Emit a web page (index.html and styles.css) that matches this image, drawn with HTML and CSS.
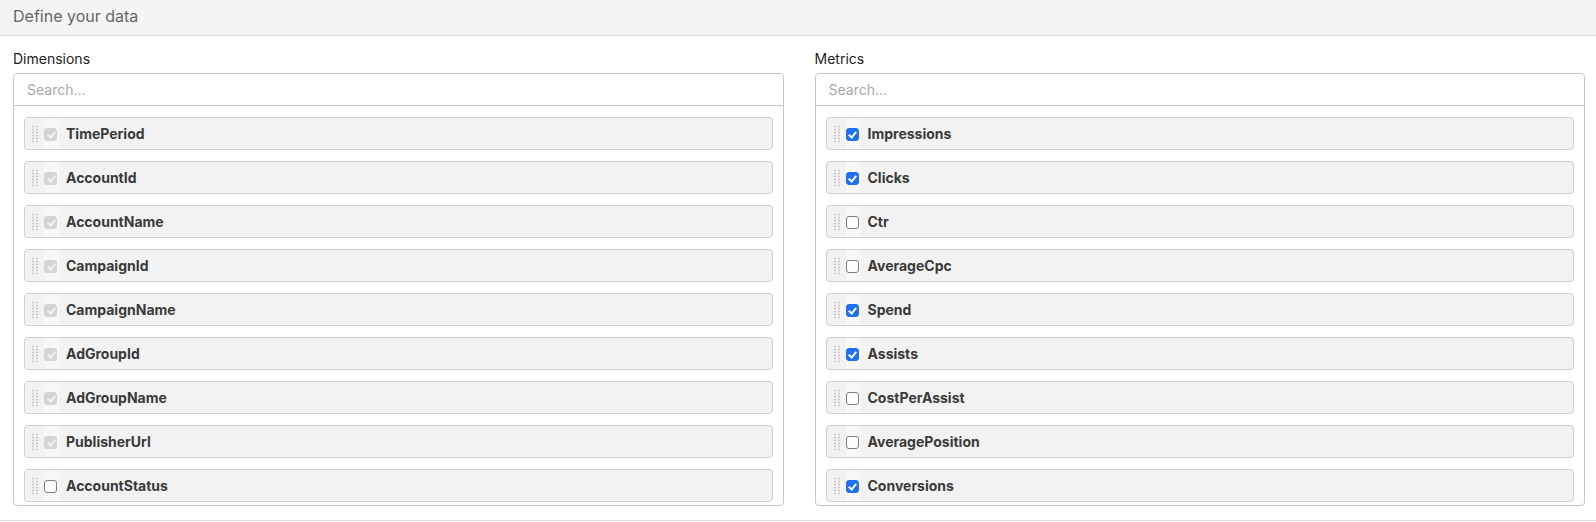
FILE: index.html
```html
<!DOCTYPE html>
<html>
<head>
<title>Define your data</title>
<meta charset="UTF-8">
<meta name="viewport" content="width=device-width, initial-scale=1.0">
<link rel="stylesheet" href="styles.css">
</head>
<body>
<div class="panel-heading">Define your data</div>
<div class="panel-body">
  <div class="column">
    <label class="column-title">Dimensions</label>
    <div class="picker">
      <input type="text" class="search" placeholder="Search...">
      <div class="field-list">
        <div class="field"><span class="grip"></span><span class="check-cell"><input type="checkbox" checked disabled></span><span class="field-name">TimePeriod</span></div>
        <div class="field"><span class="grip"></span><span class="check-cell"><input type="checkbox" checked disabled></span><span class="field-name">AccountId</span></div>
        <div class="field"><span class="grip"></span><span class="check-cell"><input type="checkbox" checked disabled></span><span class="field-name">AccountName</span></div>
        <div class="field"><span class="grip"></span><span class="check-cell"><input type="checkbox" checked disabled></span><span class="field-name">CampaignId</span></div>
        <div class="field"><span class="grip"></span><span class="check-cell"><input type="checkbox" checked disabled></span><span class="field-name">CampaignName</span></div>
        <div class="field"><span class="grip"></span><span class="check-cell"><input type="checkbox" checked disabled></span><span class="field-name">AdGroupId</span></div>
        <div class="field"><span class="grip"></span><span class="check-cell"><input type="checkbox" checked disabled></span><span class="field-name">AdGroupName</span></div>
        <div class="field"><span class="grip"></span><span class="check-cell"><input type="checkbox" checked disabled></span><span class="field-name">PublisherUrl</span></div>
        <div class="field"><span class="grip"></span><span class="check-cell"><input type="checkbox"></span><span class="field-name">AccountStatus</span></div>
      </div>
    </div>
  </div>
  <div class="column">
    <label class="column-title">Metrics</label>
    <div class="picker">
      <input type="text" class="search" placeholder="Search...">
      <div class="field-list">
        <div class="field"><span class="grip"></span><span class="check-cell"><input type="checkbox" checked></span><span class="field-name">Impressions</span></div>
        <div class="field"><span class="grip"></span><span class="check-cell"><input type="checkbox" checked></span><span class="field-name">Clicks</span></div>
        <div class="field"><span class="grip"></span><span class="check-cell"><input type="checkbox"></span><span class="field-name">Ctr</span></div>
        <div class="field"><span class="grip"></span><span class="check-cell"><input type="checkbox"></span><span class="field-name">AverageCpc</span></div>
        <div class="field"><span class="grip"></span><span class="check-cell"><input type="checkbox" checked></span><span class="field-name">Spend</span></div>
        <div class="field"><span class="grip"></span><span class="check-cell"><input type="checkbox" checked></span><span class="field-name">Assists</span></div>
        <div class="field"><span class="grip"></span><span class="check-cell"><input type="checkbox"></span><span class="field-name">CostPerAssist</span></div>
        <div class="field"><span class="grip"></span><span class="check-cell"><input type="checkbox"></span><span class="field-name">AveragePosition</span></div>
        <div class="field"><span class="grip"></span><span class="check-cell"><input type="checkbox" checked></span><span class="field-name">Conversions</span></div>
      </div>
    </div>
  </div>
</div>
<div class="panel-footer"></div>
</body>
</html>
```

FILE: styles.css
```css
body {
  margin: 0;
  font-family: Inter, "Liberation Sans", sans-serif;
  color: #222;
  background: #fff;
}
.panel-heading {
  height: 35px;
  line-height: 32px;
  padding-left: 13px;
  font-size: 16px;
  color: #666;
  background-color: #f4f4f4;
  border-bottom: 1px solid #dcdcdc;
}
.panel-body {
  display: grid;
  grid-template-columns: 1fr 1fr;
  column-gap: 31px;
  padding: 14px 11px 0 13px;
}
.column-title {
  display: block;
  font-size: 14px;
  line-height: 17px;
  margin-bottom: 6px;
  color: #222;
}
.picker {
  border: 1px solid #c8c8c8;
  border-radius: 4px;
}
.search {
  display: block;
  box-sizing: border-box;
  width: 100%;
  height: 32px;
  padding: 0 13px;
  border: none;
  border-bottom: 1px solid #c8c8c8;
  border-radius: 4px 4px 0 0;
  font-family: inherit;
  font-size: 14px;
  outline: none;
}
.search::placeholder {
  color: #a9a9a9;
}
.field-list {
  display: flex;
  flex-direction: column;
  gap: 11px;
  padding: 11px 10px 3px 10px;
}
.field {
  display: flex;
  align-items: center;
  height: 31px;
  background-color: #f2f2f2;
  border: 1px solid #cfcfcf;
  border-radius: 4px;
}
/* poignée de glisser : 2 colonnes de points */
.grip {
  width: 8px;
  height: 18px;
  margin-left: 6px;
  margin-right: 5px;
  background-image: radial-gradient(circle, #c9c9c9 0.9px, transparent 1.2px);
  background-size: 4px 3px;
}
.check-cell {
  display: flex;
  align-items: center;
  align-self: stretch;
  width: 14px;
  padding-right: 1px;
  background-color: #f7f7f7;
}
.check-cell input {
  appearance: none;
  -webkit-appearance: none;
  position: relative;
  width: 13px;
  height: 13px;
  margin: 1px 0 0 0;
  box-sizing: border-box;
  background: #fff;
  border: 1px solid #7f7f7f;
  border-radius: 3px;
}
.check-cell input:checked {
  background-color: #1f6ff2;
  border-color: #1f6ff2;
}
.check-cell input:checked::after {
  content: "";
  position: absolute;
  left: 3.5px;
  top: 1px;
  width: 3px;
  height: 6px;
  border: solid #fff;
  border-width: 0 2px 2px 0;
  transform: rotate(40deg);
}
.check-cell input:disabled:checked {
  background-color: #d4d4d4;
  border-color: #d4d4d4;
}
.check-cell input:disabled:checked::after {
  border-color: #f2f2f2;
}
.field-name {
  margin-left: 7px;
  font-size: 14px;
  font-weight: 700;
  color: #3a3a3a;
}
.panel-footer {
  margin-top: 14px;
  border-top: 1px solid #dcdcdc;
}
```
